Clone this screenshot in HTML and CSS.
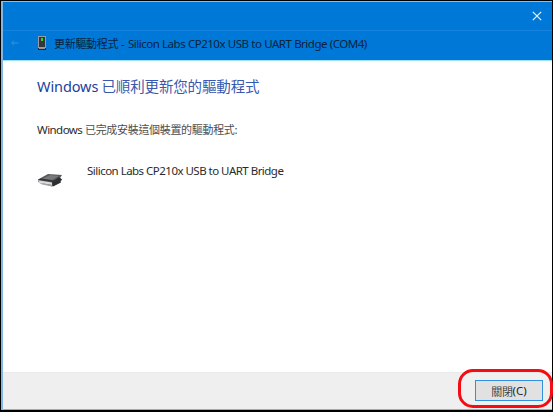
FILE: index.html
```html
<!DOCTYPE html>
<html lang="zh-Hant">
<head>
<meta charset="utf-8">
<title>更新驅動程式</title>
<link rel="stylesheet" href="styles.css">
</head>
<body>
<div class="window">
  <header class="caption">
    <svg class="close" width="10" height="10" viewBox="0 0 10 10"><path d="M.8.8 9.2 9.2M9.2.8.8 9.2"/></svg>
  </header>
  <div class="titlebar">
    <svg class="back" width="8" height="6" viewBox="0 0 8 6"><path d="M7.5 3H.8M3 .7.7 3 3 5.3"/></svg>
    <svg class="device" width="8" height="14" viewBox="0 0 8 14"><path fill="#969da4" d="M0 0h8v12H0z"/><path fill="#343638" d="M1 1h6v10H1z"/><path fill="#35cf38" d="M3 2h2v3H3z"/><path fill="#222b33" d="M0 12h8v2H0z"/><path fill="#8d9399" d="M1 12h6v1H1z"/></svg>
    <h1 class="title"><span class="cjk">更新驅動程式</span><span class="dash">-</span><span class="latin">Silicon Labs CP210x USB to UART Bridge (COM4)</span></h1>
  </div>
  <main class="content">
    <h2 class="heading"><span class="latin">Windows</span><span class="cjk">已順利更新您的驅動程式</span></h2>
    <p class="message"><span class="latin">Windows</span><span class="cjk">已完成安裝這個裝置的驅動程式:</span></p>
    <div class="item">
      <svg class="drive" width="26" height="15" viewBox="0 0 26 15"><path fill="#58595b" d="M1 6.500 11 1l14 1-2 3 2 1.500-2 3-8 4L1 9z"/><path fill="#2d2f31" d="m15 9 7-5 1 1 2 1.500-2 1.500 1 1.500-8 4z"/><path fill="#77797b" d="m5 6 8-4 9 1-7 4z"/><path fill="#333537" d="M1 6.700 4 5.500l13 2-1 1.500z"/><path fill="#dadbdc" d="m1 7.300 14 2.200v2.500L2 9.700z"/><path fill="#a2a4a6" d="m2 9.700 13 2.300v1.500L5 11.400z"/></svg>
      <span class="name">Silicon Labs CP210x USB to UART Bridge</span>
    </div>
  </main>
  <footer class="footer"><div class="ring"><button class="button"><span class="cjk">關閉</span><span class="latin">(C)</span></button></div></footer>
</div>
</body>
</html>
```
FILE: styles.css
```css
* { box-sizing: border-box; }
body {
  margin: 0;
  height: 412px;
  overflow: hidden;
  background: #000;
  padding: 1px 1px 2px;
  font-family: "Noto Sans", "Noto Sans CJK TC", sans-serif;
  color: #2b2b2b;
}
.window {
  height: 409px;
  display: flex;
  flex-direction: column;
  border: solid;
  border-width: 1px 0 1px 2px;
  border-color: #9db7cf #000 #aaa #84b6e4;
  background: #fff;
}
.caption {
  height: 28px;
  flex: none;
  display: flex;
  justify-content: flex-end;
  padding: 9px 10px 0 0;
  background: #0078d7;
}
.close { fill: none; stroke: #eaf5ff; stroke-width: 1.2; }
.titlebar {
  height: 31px;
  flex: none;
  display: flex;
  align-items: center;
  padding: 0 0 5px 8px;
  background: #0078d7;
  border-top: 1px solid #1683df;
  border-bottom: 1px solid #9ce3fa;
}
.back { fill: none; stroke: #3d91d6; stroke-width: 1; }
.device { margin-left: 19px; }
h1, h2, p { margin: 0; font-weight: 400; display: flex; white-space: nowrap; align-items: baseline; line-height: 20px; }
.title { margin: 0 0 0 8px; color: #07233f; font-size: 11.5px; }
.title .cjk { width: 67px; font-size: 11px; letter-spacing: -.3px; }
.dash { width: 7px; }
.title .latin { letter-spacing: -.5px; word-spacing: .3px; }
.cjk { font-family: "Noto Sans CJK TC", sans-serif; font-weight: 400; }
.content { flex: 1; padding: 14px 0 0 34px; }
.heading { color: #1c3e9c; font-size: 14.5px; line-height: 22px; }
.heading .latin { width: 64.5px; letter-spacing: -.1px; }
.heading .cjk { color: #3a59ae; letter-spacing: -.15px; }
.message { margin-top: 22px; font-size: 11.5px; }
.message .latin { width: 48px; letter-spacing: -.55px; }
.message .cjk { color: #4d4d4d; font-size: 11px; letter-spacing: -.32px; }
.item { display: flex; margin-top: 21px; }
.drive { margin: 12px 0 0 0; }
.name { margin-left: 24px; font-size: 11.5px; line-height: 20px; letter-spacing: -.52px; white-space: nowrap; }
.footer {
  height: 37px;
  flex: none;
  display: flex;
  justify-content: flex-end;
  background: #efefef;
  border-top: 1px solid #e9e9e9;
}
.ring {
  width: 95px;
  height: 39px;
  flex: none;
  margin: -4px -1px 0 0;
  border: 3px solid #f50b12;
  border-radius: 15px;
  padding: 8px 0 0 14px;
}
.button {
  display: flex;
  align-items: center;
  justify-content: center;
  width: 68px;
  height: 21px;
  padding: 0;
  border: 1px solid #3290de;
  background: #e1e1e1;
  color: #222;
  font: 11.5px "Noto Sans", sans-serif;
}
.button .cjk { color: #444; font-size: 11px; letter-spacing: -.3px; }
```
